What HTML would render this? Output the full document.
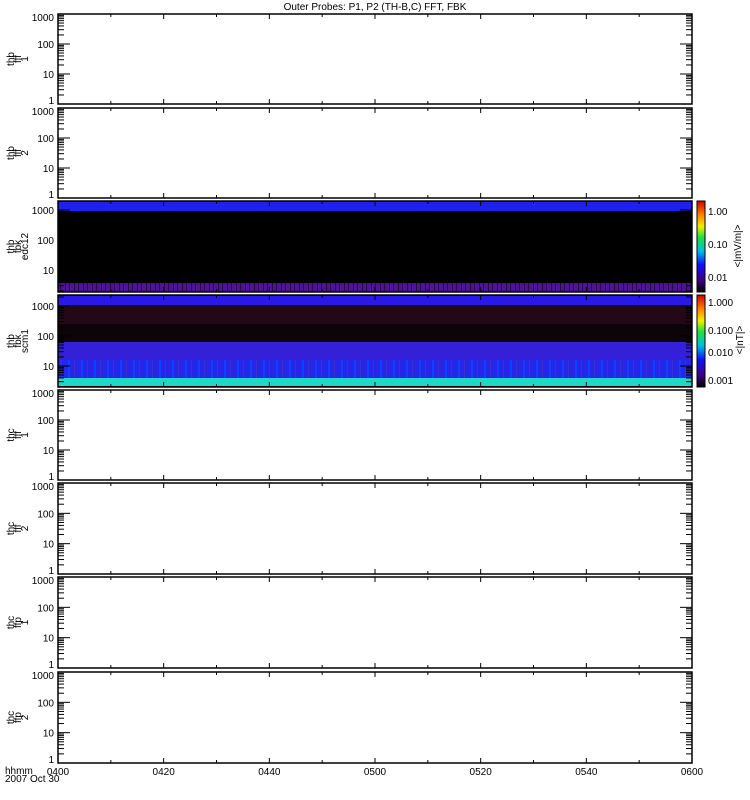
<!DOCTYPE html>
<html><head><meta charset="utf-8"><style>
html,body{margin:0;padding:0;background:#fff;width:750px;height:800px;overflow:hidden}
svg text{font-family:"Liberation Sans",sans-serif;font-size:10px;fill:#000}
</style></head><body>
<svg id="s" width="750" height="800" xmlns="http://www.w3.org/2000/svg">
<defs>
<linearGradient id="cb" x1="0" y1="1" x2="0" y2="0">
<stop offset="0" stop-color="#000"/><stop offset="0.12" stop-color="#40007a"/><stop offset="0.3" stop-color="#1010ff"/><stop offset="0.45" stop-color="#00c0e0"/><stop offset="0.6" stop-color="#20e040"/><stop offset="0.72" stop-color="#f0f000"/><stop offset="0.85" stop-color="#ff8000"/><stop offset="1" stop-color="#d00000"/>
</linearGradient>
<pattern id="pv" width="9" height="8" patternUnits="userSpaceOnUse"><rect width="9" height="8" fill="#50109a"/><rect x="2" width="1" height="8" fill="#200040"/><rect x="6" width="1" height="8" fill="#2a0050"/></pattern>
<pattern id="bs" width="13" height="18" patternUnits="userSpaceOnUse"><rect width="13" height="18" fill="#2626e8"/><rect x="3" width="2" height="18" fill="#1040ff"/><rect x="9" width="1" height="18" fill="#3a30d0"/></pattern>
</defs>
<text x="375" y="10" text-anchor="middle">Outer Probes: P1, P2 (TH-B,C) FFT, FBK</text>
<rect x="58" y="201" width="634" height="91" fill="#000"/>
<rect x="58" y="202" width="634" height="9" fill="#2020ee"/>
<rect x="58" y="283" width="634" height="8" fill="url(#pv)"/>
<rect x="58" y="295" width="634" height="92" fill="#000"/>
<rect x="58" y="296" width="634" height="9" fill="#2a18e8"/>
<rect x="58" y="305" width="634" height="19" fill="#230818"/>
<rect x="58" y="324" width="634" height="18" fill="#0c0408"/>
<rect x="58" y="342" width="634" height="18" fill="#3420d8"/>
<rect x="58" y="360" width="634" height="18" fill="url(#bs)"/>
<rect x="58" y="378" width="634" height="8" fill="#20d8c8"/>
<rect x="697" y="201" width="8" height="91" fill="url(#cb)" stroke="#000"/>
<rect x="697" y="295" width="8" height="92" fill="url(#cb)" stroke="#000"/>
<text x="708" y="215" font-size="9">1.00</text><text x="708" y="248" font-size="9">0.10</text><text x="708" y="281" font-size="9">0.01</text>
<text x="708" y="306" font-size="9">1.000</text><text x="708" y="334" font-size="9">0.100</text><text x="708" y="356" font-size="9">0.010</text><text x="708" y="384" font-size="9">0.001</text>
<text transform="translate(741,246) rotate(-90)" text-anchor="middle" font-size="9">&lt;|mV/m|&gt;</text>
<text transform="translate(743,340) rotate(-90)" text-anchor="middle" font-size="9">&lt;|nT|&gt;</text>
<g id="g"></g>
<text x="5" y="774" font-size="9">hhmm</text><text x="5" y="782" font-size="9">2007 Oct 30</text>
</svg>
<script>
var g=document.getElementById('g'),h='';
var P=[[14,104,1,['thb','fff','1']],[108,198,1,['thb','fff','2']],[201,292,0,['thb','fbk','edc12']],[295,387,0,['thb','fbk','scm1']],[390,480,1,['thc','fff','1']],[483,574,1,['thc','fff','2']],[577,668,1,['thc','ffp','1']],[672,763,1,['thc','ffp','2']]];
var X0=58,X1=692;
P.forEach(function(p){
 var t=p[0],b=p[1],H=b-t;
 h+='<rect x="'+X0+'" y="'+t+'" width="'+(X1-X0)+'" height="'+H+'" fill="none" stroke="#000" stroke-width="1.5"/>';
 var dec=p[2]?H/3:30;
 var base=p[2]?b:(t+11+dec*3+(p===P[2]?-2:0));
 var labs=p[2]?[1,10,100,1000]:[10,100,1000];
 for(var d=0;d<4;d++){
  for(var k=1;k<10;k++){
   var y=base-dec*(d+Math.log10(k));
   if(y<t||y>b)continue;
   var L=(k==1)?12:6;
   h+='<line x1="'+X0+'" x2="'+(X0+L)+'" y1="'+y+'" y2="'+y+'" stroke="#000"/>';
   h+='<line x1="'+X1+'" x2="'+(X1-L)+'" y1="'+y+'" y2="'+y+'" stroke="#000"/>';
   if(k==1&&labs.indexOf(Math.pow(10,d))>=0){var ty=y+4;if(ty>b)ty=b;if(ty<t+7)ty=t+7;h+='<text x="54" y="'+ty+'" text-anchor="end" font-size="9">'+Math.pow(10,d)+'</text>';}
  }
 }
 for(var i=1;i<12;i++){var x=X0+i*(X1-X0)/12,l=(i%2==0)?5:3;
  h+='<line x1="'+x+'" x2="'+x+'" y1="'+t+'" y2="'+(t+l)+'" stroke="#000"/><line x1="'+x+'" x2="'+x+'" y1="'+b+'" y2="'+(b-l)+'" stroke="#000"/>';}
 var cy=(t+b)/2;
 h+='<text transform="translate(14,'+cy+') rotate(-90)" text-anchor="middle" font-size="8"><tspan x="0" dy="0">'+p[3][0]+'</tspan><tspan x="0" dy="7">'+p[3][1]+'</tspan><tspan x="0" dy="7">'+p[3][2]+'</tspan></text>';
});
['0400','0420','0440','0500','0520','0540','0600'].forEach(function(s,i){h+='<text x="'+(X0+i*(X1-X0)/6)+'" y="775" text-anchor="middle" font-size="9">'+s+'</text>';});
g.innerHTML=h;
</script>
</body></html>
